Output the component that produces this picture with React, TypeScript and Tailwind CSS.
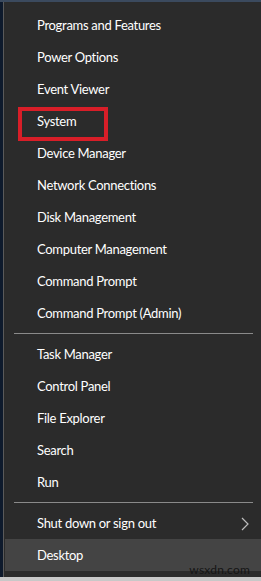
const topItems = [
    'Programs and Features',
    'Power Options',
    'Event Viewer',
    'System',
    'Device Manager',
    'Network Connections',
    'Disk Management',
    'Computer Management',
    'Command Prompt',
    'Command Prompt (Admin)'
]

const midItems = ['Task Manager', 'Control Panel', 'File Explorer', 'Search', 'Run']

function Item({ label }: { label: string }) {
    return (
        <div className="h-[32px] flex items-center pt-[2px] pl-[33px] text-[13px] tracking-[-0.3px] text-white">
            {label}
        </div>
    )
}

function Separator() {
    return (
        <div className="h-[9px] flex items-center pl-[10px] pr-[8px]">
            <div className="h-px w-full bg-[#8a8a8a]"></div>
        </div>
    )
}

export default function App() {
    return (
        <div
            className="relative w-[261px] h-[581px] bg-[#0e1a2c] overflow-hidden flex flex-col"
            style={{ fontFamily: 'Lato, "Open Sans", sans-serif' }}
        >
            <div className="h-[2px] bg-[#3b4a5e]"></div>
            <div className="flex-1 ml-[3px] border-l border-[#5a5a5a] bg-[#2b2b2b] pt-[7px] flex flex-col">
                {topItems.map(label => (
                    <Item key={label} label={label} />
                ))}
                <Separator />
                {midItems.map(label => (
                    <Item key={label} label={label} />
                ))}
                <Separator />
                <div className="h-[32px] flex items-center justify-between pt-[2px] pl-[33px] pr-[12px] text-[13px] tracking-[-0.3px] text-white">
                    <span>Shut down or sign out</span>
                    <svg width="8" height="14" viewBox="0 0 8 14">
                        <path d="M1 1 L7 7 L1 13" fill="none" stroke="#bdbdbd" strokeWidth="1.2" />
                    </svg>
                </div>
                <div className="ml-[1px] h-[32px] flex items-center pt-[2px] pl-[32px] text-[13px] tracking-[-0.3px] text-white bg-[#444444]">
                    Desktop
                </div>
            </div>
            <div className="h-[4px] bg-[#c8c8c8]"></div>
            <div className="absolute left-[18px] top-[107px] w-[90px] h-[34px] border-[4px] border-[#d81e28]"></div>
            <div className="absolute right-[11px] top-[564px] text-[12px] leading-none text-[#151515] tracking-[0.2px]">
                wsxdn.com
            </div>
        </div>
    )
}
